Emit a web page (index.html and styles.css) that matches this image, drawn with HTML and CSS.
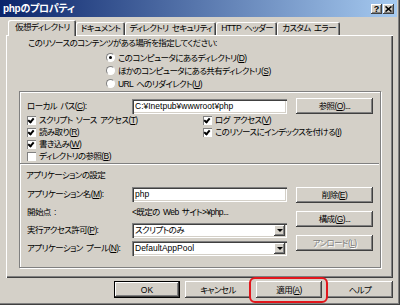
FILE: index.html
```html
<!DOCTYPE html>
<html lang="ja">
<head>
    <meta charset="UTF-8">
    <meta name="viewport" content="width=device-width, initial-scale=1.0">
    <title>phpのプロパティ</title>
    <link rel="stylesheet" href="styles.css">
</head>
<body>
    <div class="window">
        <div class="titlebar">
            <span class="title">phpのプロパティ</span>
            <div class="caption-buttons">
                <span class="cap-btn">?</span>
                <span class="cap-btn">
                    <svg width="7" height="6" viewBox="0 0 7 6"><path d="M0.5 0.5 L6.5 5.5 M6.5 0.5 L0.5 5.5" stroke="#000" stroke-width="1.6"/></svg>
                </span>
            </div>
        </div>
        <div class="content">
            <div class="tabs">
                <div class="tab active">仮想ディレクトリ</div>
                <div class="tab">ドキュメント</div>
                <div class="tab">ディレクトリ セキュリティ</div>
                <div class="tab">HTTP ヘッダー</div>
                <div class="tab">カスタム エラー</div>
            </div>
            <div class="panel">
                <p class="prompt">このリソースのコンテンツがある場所を指定してください:</p>
                <div class="radios">
                    <div class="option"><span class="radio checked"></span>このコンピュータにあるディレクトリ(<u>D</u>)</div>
                    <div class="option"><span class="radio"></span>ほかのコンピュータにある共有ディレクトリ(<u>S</u>)</div>
                    <div class="option"><span class="radio"></span>URL へのリダイレクト(<u>U</u>)</div>
                </div>
                <div class="group">
                    <div class="path-row">
                        <span class="label">ローカル パス(<u>C</u>):</span>
                        <span class="field">C:¥Inetpub¥wwwroot¥php</span>
                        <span class="btn">参照(<u>O</u>)...</span>
                    </div>
                    <div class="checks">
                        <div class="option"><span class="check on"></span>スクリプト ソース アクセス(<u>T</u>)</div>
                        <div class="option"><span class="check on"></span>ログ アクセス(<u>V</u>)</div>
                        <div class="option"><span class="check on"></span>読み取り(<u>R</u>)</div>
                        <div class="option"><span class="check on"></span>このリソースにインデックスを付ける(<u>I</u>)</div>
                        <div class="option"><span class="check on"></span>書き込み(<u>W</u>)</div>
                        <div class="option"></div>
                        <div class="option"><span class="check"></span>ディレクトリの参照(<u>B</u>)</div>
                    </div>
                    <div class="separator"></div>
                    <p class="section-title">アプリケーションの設定</p>
                    <div class="app-settings">
                        <div class="app-rows">
                            <div class="app-row">
                                <span class="label">アプリケーション名(<u>M</u>):</span>
                                <span class="field">php</span>
                            </div>
                            <div class="app-row">
                                <span class="label">開始点 :</span>
                                <span class="value">&lt;既定の Web サイト&gt;¥php...</span>
                            </div>
                            <div class="app-row">
                                <span class="label">実行アクセス許可(<u>P</u>):</span>
                                <span class="field select">スクリプトのみ<span class="drop"></span></span>
                            </div>
                            <div class="app-row">
                                <span class="label">アプリケーション プール(<u>N</u>):</span>
                                <span class="field select latin">DefaultAppPool<span class="drop"></span></span>
                            </div>
                        </div>
                        <div class="app-buttons">
                            <span class="btn">削除(<u>E</u>)</span>
                            <span class="btn">構成(<u>G</u>)...</span>
                            <span class="btn disabled">アンロード(<u>L</u>)</span>
                        </div>
                    </div>
                </div>
            </div>
            <div class="footer">
                <span class="btn default latin">OK</span>
                <span class="btn">キャンセル</span>
                <span class="btn highlight">適用(<u>A</u>)</span>
                <span class="btn">ヘルプ</span>
            </div>
        </div>
    </div>
</body>
</html>
```

FILE: styles.css
```css
* {
    box-sizing: border-box;
}

body {
    margin: 0;
    font-family: "Liberation Sans", "Noto Sans CJK JP", sans-serif;
    font-size: 8.5px;
    font-feature-settings: "palt" 1;
    letter-spacing: -0.6px;
    word-spacing: 1.5px;
    line-height: 12px;
    color: #000000;
}

p {
    margin: 0;
}

u {
    text-decoration-thickness: 1px;
    text-underline-offset: 1px;
}

.latin {
    letter-spacing: 0;
}

.window {
    width: 400px;
    height: 305px;
    background: #d4d0c8;
    padding: 0 3px 3px 0;
    box-shadow: inset -1px -1px #404040, inset -2px -2px #808080;
}

/* title bar */
.titlebar {
    height: 17px;
    display: flex;
    align-items: center;
    justify-content: space-between;
    padding: 0 3px;
    background: linear-gradient(to right, #0a246a, #a6caf0);
}

.title {
    color: #ffffff;
    font-weight: bold;
    font-size: 10px;
    letter-spacing: -0.3px;
}

.caption-buttons {
    display: flex;
    gap: 1px;
}

.cap-btn {
    width: 11px;
    height: 10px;
    display: flex;
    align-items: center;
    justify-content: center;
    background: #d4d0c8;
    font: bold 9px "Liberation Sans", sans-serif;
    letter-spacing: 0;
    box-shadow: inset -1px -1px #404040, inset 1px 1px #ffffff, inset -2px -2px #808080;
}

/* tabs and page */
.content {
    padding: 3px 4px 0 6px;
}

.tabs {
    display: flex;
    align-items: flex-end;
    height: 15px;
    padding-left: 2px;
    position: relative;
    z-index: 1;
}

.tab {
    height: 13px;
    line-height: 13px;
    padding: 0 4px 0 5px;
    border-radius: 2px 2px 0 0;
    white-space: nowrap;
    box-shadow: inset 1px 1px #ffffff, inset -1px 0 #404040, inset -2px 0 #808080;
}

.tab.active {
    height: 16px;
    line-height: 15px;
    margin-bottom: -1px;
    padding: 0 6px 0 7px;
    background: #d4d0c8;
}

.panel {
    height: 243px;
    padding: 2px 12px 0 13px;
    box-shadow: inset 1px 1px #ffffff, inset -1px -1px #404040, inset -2px -2px #808080;
}

.prompt {
    margin-left: 9px;
}

.radios {
    margin: 2px 0 0 87px;
}

.option {
    display: flex;
    align-items: center;
    height: 13px;
    white-space: nowrap;
}

.radio {
    width: 9px;
    height: 9px;
    margin-right: 3px;
    border-radius: 50%;
    background: #ffffff;
    border: 1px solid;
    border-color: #808080 #ffffff #ffffff #808080;
    display: flex;
    align-items: center;
    justify-content: center;
}

.radio.checked::after {
    content: "";
    width: 3px;
    height: 3px;
    border-radius: 50%;
    background: #000000;
}

/* group box */
.group {
    height: 177px;
    margin-top: 1px;
    padding: 6px 6px 0 7px;
    border: 1px solid #808080;
    box-shadow: 1px 1px #ffffff, inset 1px 1px #ffffff;
}

.path-row,
.app-row {
    display: flex;
    align-items: center;
}

.path-row {
    height: 16px;
}

.label {
    width: 105px;
    flex-shrink: 0;
    white-space: nowrap;
}

.field {
    width: 155px;
    height: 15px;
    line-height: 15px;
    padding-left: 3px;
    background: #ffffff;
    white-space: nowrap;
    letter-spacing: 0;
    box-shadow: inset 1px 1px #808080, inset 2px 2px #404040, inset -1px -1px #ffffff, inset -2px -2px #d4d0c8;
}

.field.select {
    display: flex;
    justify-content: space-between;
    align-items: center;
    letter-spacing: -0.6px;
}

.field.select.latin {
    letter-spacing: 0;
}

.drop {
    width: 11px;
    height: 11px;
    margin-right: 2px;
    background: #d4d0c8;
    display: flex;
    align-items: center;
    justify-content: center;
    box-shadow: inset -1px -1px #404040, inset 1px 1px #ffffff, inset -2px -2px #808080;
}

.drop::after {
    content: "";
    margin-top: 1px;
    border-left: 3px solid transparent;
    border-right: 3px solid transparent;
    border-top: 3px solid #000000;
}

.btn {
    height: 16px;
    display: flex;
    align-items: center;
    justify-content: center;
    background: #d4d0c8;
    white-space: nowrap;
    box-shadow: inset -1px -1px #404040, inset 1px 1px #ffffff, inset -2px -2px #808080;
}

.path-row .btn {
    width: 77px;
    margin-left: 9px;
}

.checks {
    display: grid;
    grid-template-columns: 176px 1fr;
    grid-auto-rows: 12px;
}

.checks .option {
    height: 12px;
}

.check {
    width: 9px;
    height: 9px;
    margin-right: 3px;
    background: #ffffff;
    box-shadow: inset 1px 1px #808080, inset -1px -1px #ffffff;
    position: relative;
}

.check.on::after {
    content: "";
    position: absolute;
    left: 2px;
    top: 1px;
    width: 2px;
    height: 4px;
    border-right: 2px solid #000000;
    border-bottom: 2px solid #000000;
    transform: rotate(40deg);
}

.separator {
    height: 2px;
    margin: 1px -5px 0 -7px;
    border-top: 1px solid #808080;
    border-bottom: 1px solid #ffffff;
}

.section-title {
    margin: 4px 0 0 -1px;
}

.app-settings {
    display: flex;
    margin-top: 4px;
}

.app-row {
    height: 18px;
}

.value {
    white-space: nowrap;
}

.app-buttons {
    display: flex;
    flex-direction: column;
    gap: 8px;
    width: 77px;
    margin: 2px 0 0 9px;
}

.btn.disabled {
    color: #808080;
    text-shadow: 1px 1px #ffffff;
}

/* dialog buttons */
.footer {
    display: flex;
    justify-content: flex-end;
    gap: 5px;
    margin-top: 3px;
}

.footer .btn {
    width: 66px;
    height: 17px;
}

.btn.default {
    box-shadow: inset 0 0 0 1px #000000, inset -2px -2px #404040, inset 2px 2px #ffffff, inset -3px -3px #808080;
}

.btn.highlight {
    position: relative;
}

.btn.highlight::after {
    content: "";
    position: absolute;
    top: -4px;
    bottom: -5px;
    left: -7px;
    right: -6px;
    border: 2px solid #e2161c;
    border-radius: 6px;
}
```
